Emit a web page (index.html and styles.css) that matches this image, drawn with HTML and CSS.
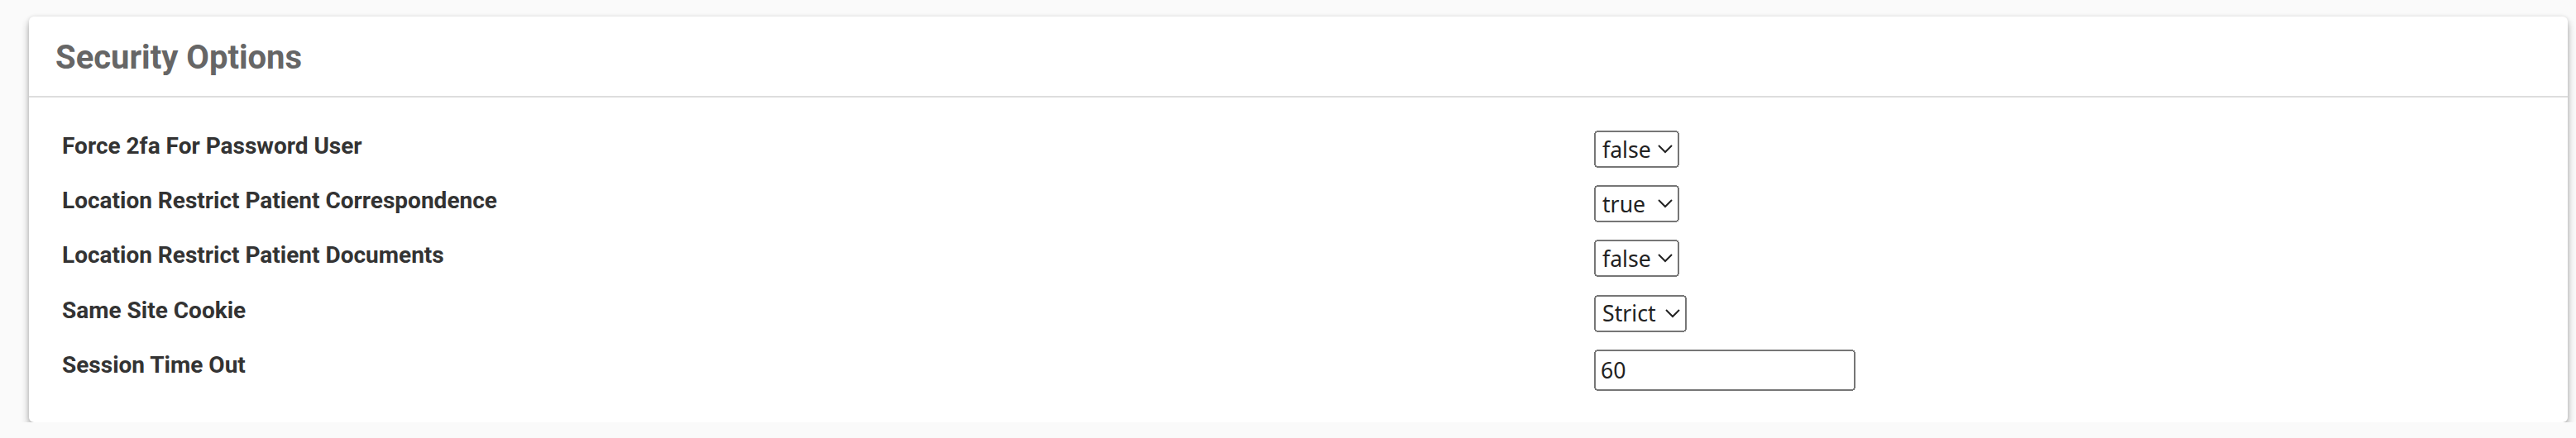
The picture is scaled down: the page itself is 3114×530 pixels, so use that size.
FILE: index.html
```html
<!DOCTYPE html>
<html lang="en">
<head>
<meta charset="utf-8">
<title>Security Options</title>
<link rel="stylesheet" href="styles.css">
</head>
<body>
<div class="page">
  <section class="card">
    <header class="card-header">
      <h2 class="card-title">Security Options</h2>
    </header>
    <div class="card-body">
      <div class="row">
        <label class="row-label">Force 2fa For Password User</label>
        <div class="row-control">
          <select class="ctl-select">
            <option selected>false</option>
            <option>true</option>
          </select>
        </div>
      </div>
      <div class="row">
        <label class="row-label">Location Restrict Patient Correspondence</label>
        <div class="row-control">
          <select class="ctl-select">
            <option selected>true</option>
            <option>false</option>
          </select>
        </div>
      </div>
      <div class="row">
        <label class="row-label">Location Restrict Patient Documents</label>
        <div class="row-control">
          <select class="ctl-select">
            <option selected>false</option>
            <option>true</option>
          </select>
        </div>
      </div>
      <div class="row">
        <label class="row-label">Same Site Cookie</label>
        <div class="row-control">
          <select class="ctl-select">
            <option selected>Strict</option>
            <option>Lax</option>
            <option>None</option>
          </select>
        </div>
      </div>
      <div class="row row-last">
        <label class="row-label">Session Time Out</label>
        <div class="row-control">
          <input class="ctl-input" type="text" value="60">
        </div>
      </div>
    </div>
  </section>
</div>
</body>
</html>
```
FILE: styles.css
```css
html {
  zoom: 2;
}

body {
  margin: 0;
  background: #fafafa;
  font-family: Roboto, "Liberation Sans", sans-serif;
}

.page {
  padding: 10px 5px 0 17.5px;
}

.card {
  background: #ffffff;
  border-radius: 3px;
  box-shadow: 0 3px 5px rgba(0, 0, 0, 0.32), 0 0 2px rgba(0, 0, 0, 0.1);
}

.card-header {
  padding: 13px 16px 11px;
  border-bottom: 1px solid #dddddd;
}

.card-title {
  margin: 0;
  font-size: 20px;
  line-height: 24px;
  font-weight: 700;
  color: #666666;
}

.card-body {
  padding: 20px 20px 19px;
}

.row {
  display: grid;
  grid-template-columns: 926px 1fr;
  align-items: start;
  min-height: 33.1px;
}

.row-last {
  min-height: 0;
}

.row-label {
  font-size: 14px;
  line-height: 19px;
  font-weight: 700;
  color: #333333;
}

.ctl-select {
  font-family: "Noto Sans", "Open Sans", sans-serif;
  font-size: 13.33px;
  color: #222222;
  height: 22.5px;
  box-sizing: border-box;
}

.ctl-input {
  font-family: "Noto Sans", "Open Sans", sans-serif;
  font-size: 13.33px;
  color: #222222;
  width: 158px;
  height: 25.3px;
  box-sizing: border-box;
}
```
